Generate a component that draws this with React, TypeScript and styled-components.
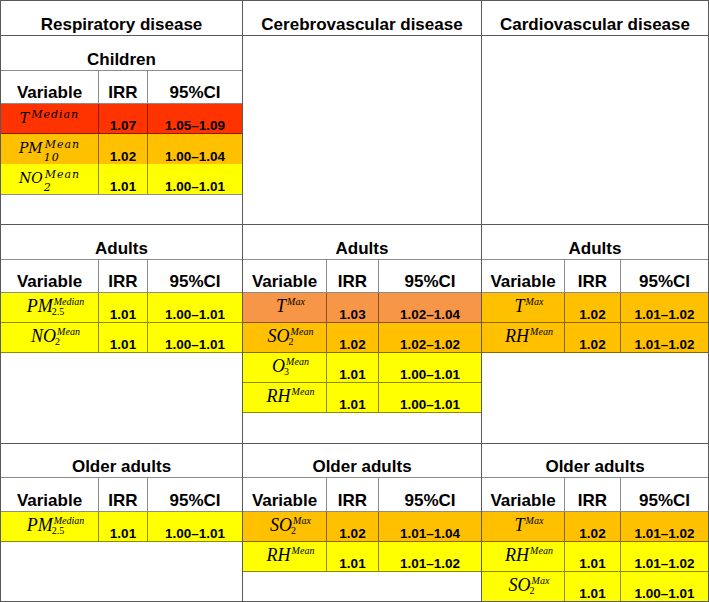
import React from "react";
import styled, { createGlobalStyle } from "styled-components";

type Variant = "math" | "times";

type Formula = { base: string; sup: string; sub?: string };

type Row = { v: Formula; irr: string; ci: string; color: string };

type Block = { title: string; rows: Row[] } | null;

const Colors = {
  Outer: "#595959",
  Inner: "#8c8c8c",
  Red: "#ff3300",
  LightOrange: "#f79646",
  Orange: "#ffc000",
  Yellow: "#ffff00",
};

const columns = [
  { name: "Respiratory disease", tracks: "98px 49px 1fr" },
  { name: "Cerebrovascular disease", tracks: "84px 52px 1fr" },
  { name: "Cardiovascular disease", tracks: "83px 56px 1fr" },
];

const T = (sup: string): Formula => ({ base: "T", sup });

const sections: {
  height: number;
  titleH: number;
  headH: number;
  variant: Variant[];
  blocks: Block[];
}[] = [
  {
    height: 189,
    titleH: 35,
    headH: 33,
    variant: ["math", "times", "times"],
    blocks: [
      {
        title: "Children",
        rows: [
          { v: T("Median"), irr: "1.07", ci: "1.05–1.09", color: Colors.Red },
          { v: { base: "PM", sup: "Mean", sub: "10" }, irr: "1.02", ci: "1.00–1.04", color: Colors.Orange },
          { v: { base: "NO", sup: "Mean", sub: "2" }, irr: "1.01", ci: "1.00–1.01", color: Colors.Yellow },
        ],
      },
      null,
      null,
    ],
  },
  {
    height: 219,
    titleH: 35,
    headH: 33,
    variant: ["times", "times", "times"],
    blocks: [
      {
        title: "Adults",
        rows: [
          { v: { base: "PM", sup: "Median", sub: "2.5" }, irr: "1.01", ci: "1.00–1.01", color: Colors.Yellow },
          { v: { base: "NO", sup: "Mean", sub: "2" }, irr: "1.01", ci: "1.00–1.01", color: Colors.Yellow },
        ],
      },
      {
        title: "Adults",
        rows: [
          { v: T("Max"), irr: "1.03", ci: "1.02–1.04", color: Colors.LightOrange },
          { v: { base: "SO", sup: "Mean", sub: "2" }, irr: "1.02", ci: "1.02–1.02", color: Colors.Orange },
          { v: { base: "O", sup: "Mean", sub: "3" }, irr: "1.01", ci: "1.00–1.01", color: Colors.Yellow },
          { v: { base: "RH", sup: "Mean" }, irr: "1.01", ci: "1.00–1.01", color: Colors.Yellow },
        ],
      },
      {
        title: "Adults",
        rows: [
          { v: T("Max"), irr: "1.02", ci: "1.01–1.02", color: Colors.Orange },
          { v: { base: "RH", sup: "Mean" }, irr: "1.02", ci: "1.01–1.02", color: Colors.Orange },
        ],
      },
    ],
  },
  {
    height: 158,
    titleH: 34,
    headH: 34,
    variant: ["times", "times", "times"],
    blocks: [
      {
        title: "Older adults",
        rows: [
          { v: { base: "PM", sup: "Median", sub: "2.5" }, irr: "1.01", ci: "1.00–1.01", color: Colors.Yellow },
        ],
      },
      {
        title: "Older adults",
        rows: [
          { v: { base: "SO", sup: "Max", sub: "2" }, irr: "1.02", ci: "1.01–1.04", color: Colors.Orange },
          { v: { base: "RH", sup: "Mean" }, irr: "1.01", ci: "1.01–1.02", color: Colors.Yellow },
        ],
      },
      {
        title: "Older adults",
        rows: [
          { v: T("Max"), irr: "1.02", ci: "1.01–1.02", color: Colors.Orange },
          { v: { base: "RH", sup: "Mean" }, irr: "1.01", ci: "1.01–1.02", color: Colors.Yellow },
          { v: { base: "SO", sup: "Max", sub: "2" }, irr: "1.01", ci: "1.00–1.01", color: Colors.Yellow },
        ],
      },
    ],
  },
];

const GlobalStyle = createGlobalStyle`
  html, body {
    margin: 0;
    padding: 0;
    background: #ffffff;
  }
  body {
    font-family: "Liberation Sans", Arial, sans-serif;
    color: #000000;
  }
`;

const Sheet = styled.div<{ $rows: string }>`
  width: 709px;
  box-sizing: border-box;
  display: grid;
  grid-template-columns: 242px 239px 227px;
  grid-template-rows: ${(p) => p.$rows};
  border-top: 1px solid ${Colors.Outer};
  border-left: 1px solid ${Colors.Outer};
`;

const Cell = styled.div`
  box-sizing: border-box;
  border-right: 1px solid ${Colors.Outer};
  border-bottom: 1px solid ${Colors.Outer};
  overflow: hidden;
  display: flex;
  flex-direction: column;
  min-width: 0;
`;

const DiseaseCell = styled(Cell)`
  justify-content: flex-end;
  align-items: center;
  padding-bottom: 1px;
  font-size: 17px;
  line-height: 19px;
  font-weight: 700;
`;

const Title = styled.div<{ $h: number }>`
  box-sizing: border-box;
  height: ${(p) => p.$h}px;
  flex: none;
  display: flex;
  align-items: flex-end;
  justify-content: center;
  padding-bottom: 1px;
  border-bottom: 1px solid ${Colors.Inner};
  font-size: 17px;
  line-height: 19px;
  font-weight: 700;
`;

const Grid = styled.div<{ $tracks: string; $h: number; $bg?: string }>`
  box-sizing: border-box;
  flex: none;
  height: ${(p) => p.$h}px;
  display: grid;
  grid-template-columns: ${(p) => p.$tracks};
  background: ${(p) => p.$bg ?? "transparent"};
`;

const HeadCell = styled.div`
  box-sizing: border-box;
  display: flex;
  align-items: flex-end;
  justify-content: center;
  padding-bottom: 1px;
  border-bottom: 1px solid ${Colors.Inner};
  font-size: 17px;
  line-height: 19px;
  font-weight: 700;
  &:not(:last-child) {
    border-right: 1px solid ${Colors.Inner};
  }
`;

const DataCell = styled.div`
  box-sizing: border-box;
  display: flex;
  justify-content: center;
  align-items: flex-end;
  border-bottom: 1px solid rgba(0, 0, 0, 0.45);
  font-size: 13.5px;
  line-height: 15px;
  font-weight: 700;
  &:not(:last-child) {
    border-right: 1px solid rgba(0, 0, 0, 0.45);
  }
`;

const VarCell = styled(DataCell)<{ $variant: Variant }>`
  align-items: flex-start;
  padding-top: ${(p) => (p.$variant === "math" ? 7 : 4)}px;
  padding-left: ${(p) => (p.$variant === "math" ? 0 : 12)}px;
  font-weight: 400;
`;

const Expr = styled.span<{ $variant: Variant }>`
  display: inline-flex;
  align-items: flex-start;
  font-style: italic;
  font-family: ${(p) =>
    p.$variant === "math"
      ? `"DejaVu Serif", "Liberation Serif", serif`
      : `"Liberation Serif", "Times New Roman", serif`};
`;

const Base = styled.span<{ $variant: Variant }>`
  font-size: ${(p) => (p.$variant === "math" ? 14 : 18)}px;
  line-height: ${(p) => (p.$variant === "math" ? 14 : 18)}px;
`;

const Scripts = styled.span<{ $variant: Variant }>`
  display: flex;
  flex-direction: column;
  align-items: flex-start;
  margin-top: ${(p) => (p.$variant === "math" ? -3 : -1)}px;
  margin-left: ${(p) => (p.$variant === "math" ? 2 : 1)}px;
  font-size: ${(p) => (p.$variant === "math" ? 11 : 10)}px;
  line-height: ${(p) => (p.$variant === "math" ? 13 : 11)}px;
  letter-spacing: ${(p) => (p.$variant === "math" ? 1 : 0)}px;
`;

const Sub = styled.span<{ $variant: Variant }>`
  font-style: ${(p) => (p.$variant === "math" ? "italic" : "normal")};
  margin-left: ${(p) => (p.$variant === "math" ? -1 : -2)}px;
  margin-top: ${(p) => (p.$variant === "math" ? 0 : -1)}px;
`;

const FormulaView = ({ f, variant }: { f: Formula; variant: Variant }) => (
  <Expr $variant={variant}>
    <Base $variant={variant}>{f.base}</Base>
    <Scripts $variant={variant}>
      <span>{f.sup}</span>
      {f.sub && <Sub $variant={variant}>{f.sub}</Sub>}
    </Scripts>
  </Expr>
);

const BlockView = ({
  block,
  tracks,
  titleH,
  headH,
  variant,
}: {
  block: Block;
  tracks: string;
  titleH: number;
  headH: number;
  variant: Variant;
}) => {
  if (!block) return null;
  return (
    <>
      <Title $h={titleH}>{block.title}</Title>
      <Grid $tracks={tracks} $h={headH}>
        <HeadCell>Variable</HeadCell>
        <HeadCell>IRR</HeadCell>
        <HeadCell>95%CI</HeadCell>
      </Grid>
      {block.rows.map((r, i) => (
        <Grid key={i} $tracks={tracks} $h={30} $bg={r.color}>
          <VarCell $variant={variant}>
            <FormulaView f={r.v} variant={variant} />
          </VarCell>
          <DataCell>{r.irr}</DataCell>
          <DataCell>{r.ci}</DataCell>
        </Grid>
      ))}
    </>
  );
};

const App = () => {
  const rows = ["35px", ...sections.map((s) => `${s.height}px`)].join(" ");
  return (
    <>
      <GlobalStyle />
      <Sheet $rows={rows}>
        {columns.map((c) => (
          <DiseaseCell key={c.name}>{c.name}</DiseaseCell>
        ))}
        {sections.map((s, si) =>
          s.blocks.map((b, ci) => (
            <Cell key={`${si}-${ci}`}>
              <BlockView
                block={b}
                tracks={columns[ci].tracks}
                titleH={s.titleH}
                headH={s.headH}
                variant={s.variant[ci]}
              />
            </Cell>
          ))
        )}
      </Sheet>
    </>
  );
};

export default App;
